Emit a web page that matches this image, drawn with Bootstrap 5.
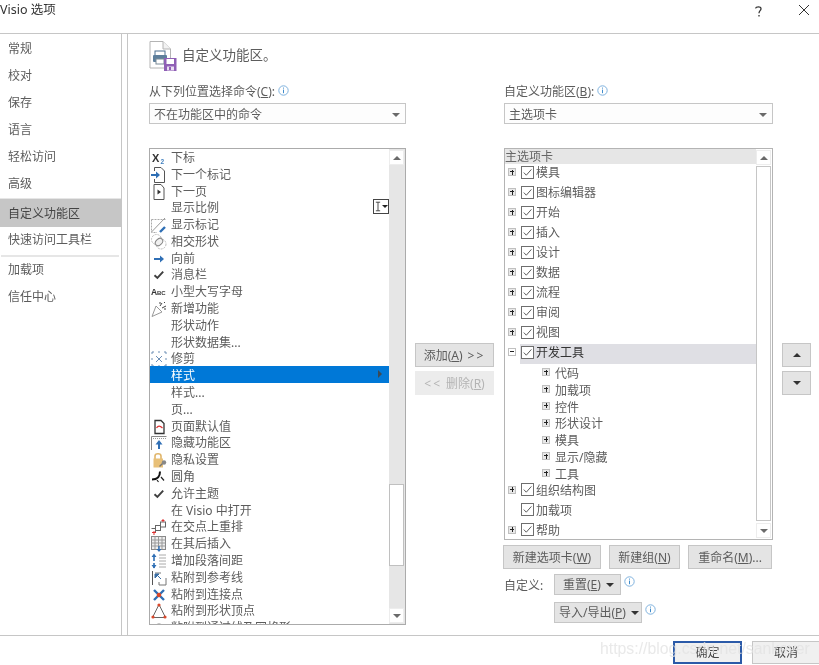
<!DOCTYPE html>
<html lang="zh-CN">
<head>
<meta charset="utf-8">
<title>Visio 选项</title>
<link rel="stylesheet" href="https://cdn.jsdelivr.net/npm/bootstrap@5.3.0/dist/css/bootstrap.min.css">
<style>
html,body{height:665px;overflow:hidden;background:#fff}
body{font-family:"Noto Sans","Noto Sans CJK SC",sans-serif;font-size:12px;line-height:16px;color:#5c5c5c;position:relative;filter:blur(.35px)}
.dlg-title{height:34px;border-bottom:1px solid #c6c6c6;color:#333;padding:1px 0 0 0}
.dlg-title .ttl{line-height:17px;font-size:12.5px}
.dlg-ctrl{color:#333;font-size:14px}
.help-ic{margin:4px 34px 0 0}
.close-ic{margin:3px 9px 0 0}
.dlg-main{height:602px;border-bottom:1px solid #c6c6c6}
.side-nav{width:122px;border-right:1px solid #c6c6c6;flex:none;padding-top:1px}
.side-item{height:27px;padding-left:8px;display:flex;align-items:center}
.side-active{height:28px;background:#c6c6c6;color:#444;margin-top:1.5px;padding-top:2px;box-shadow:0 -1px 0 #e6e6e6}
.side-sep{height:3px;margin:0 2px 0 1px;background:linear-gradient(#fff 1px,#e6e6e6 1px)}
.pane{margin-left:5px;border-left:1px solid #c6c6c6;padding-left:21px;flex:1;min-width:0}
.pane-head{height:49px;padding-top:7px;gap:5px}
.pane-head h1{font-size:13.5px;line-height:28px;margin:0;color:#5c5c5c;font-weight:400}
.pane-grid{display:grid;grid-template-columns:257px 80px 269px 29px;column-gap:9px}
.fld-label{height:20px;display:flex;align-items:flex-start}
.fld-label>span{padding-top:1px}
.fld-label u,.uk{text-underline-offset:1px}
.inf-top{margin-top:1px;margin-left:0}
.drop{height:21px;border:1px solid #c6c6c6;background:#fdfdfd;padding:2px 5px 0 4px;display:flex;align-items:center;justify-content:space-between;margin-bottom:24px}
.caret-d{width:0;height:0;border-left:4px solid transparent;border-right:4px solid transparent;border-top:4px solid #6a6a6a;flex:none}
.box-cmd{height:477px;border:1px solid #ababab;display:flex;overflow:hidden;position:relative}
.cmd-rows{flex:1;min-width:0;overflow:hidden;margin-top:-1px}
.cmd{height:16.8px;display:flex;align-items:center;padding:3px 0 0 1px;white-space:nowrap;position:relative}
.cmd svg{width:16px;height:16px;flex:none;margin-right:4px}
.cmd-on{background:#0078d7;color:#fff}
.cmd-arrow{position:absolute;right:7px;top:4px;border-top:4px solid transparent;border-bottom:4px solid transparent;border-left:4px solid #3c4a56}
.ibeam{position:absolute;left:223px;top:50px;width:16px;height:15px;border:1px solid #444;display:flex;align-items:center;gap:1px;padding-left:1px;background:#fff}
.ibeam i{display:block;width:0;height:0;border-left:3px solid transparent;border-right:3px solid transparent;border-top:3px solid #222}
.sbar{width:16px;flex:none;background:#e6e6e6;display:flex;flex-direction:column;justify-content:space-between;padding:1px 1px 1px 0}
.sbtn{height:15px;background:#fff;display:flex;align-items:center;justify-content:center;border:1px solid #ededed}
.caret-u{width:0;height:0;border-left:4px solid transparent;border-right:4px solid transparent;border-bottom:4px solid #6a6a6a}
.sthumb{background:#fff;border:1px solid #c0c0c0;height:82px;margin-top:319px}
.sbar-w{background:#fff}
.sthumb-w{flex:1;background:#fff;border:1px solid #c6c6c6;margin:1px 0 2px}
.mid-col{padding-top:260px}
.act{height:24px;width:79px;padding:1px 0 0;border-radius:0;border:1px solid #c6c6c6;background:#e4e4e4;color:#5c5c5c;font-size:12px;line-height:1;display:flex;align-items:center;justify-content:center;margin-bottom:4px;box-shadow:none}
.act[disabled]{opacity:1;background:#ececec;color:#b4b4b4;border-color:#ececec}
.act-sq{width:29px;padding:0}
.gt-pair{letter-spacing:2px;margin-left:5px}
.caret-k{width:0;height:0;border-left:4px solid transparent;border-right:4px solid transparent;border-bottom:4px solid #333}
.caret-kd{width:0;height:0;border-left:4px solid transparent;border-right:4px solid transparent;border-top:4px solid #333}
.box-tree{height:392px;border:1px solid #b4b4b4;display:flex;overflow:hidden}
.tree-rows{flex:1;min-width:0;overflow:hidden}
.tree-hd{height:15px;background:#e6e6e6;line-height:16px;color:#666}
.tn{height:20px;display:flex;align-items:flex-start;white-space:nowrap;padding-left:3px}
.tn-body{display:flex;align-items:flex-start;flex:1;height:20px;margin-left:5px;gap:2px}
.tn-body>span{padding-top:1px}
.tn-on .tn-body{background:#dfdfe4;color:#333;margin-left:4px;padding-left:1px}
.tn-blank{width:8px;flex:none}
.exp{width:8px;height:8px;flex:none;background:#e8e8e8;border:1px solid #c0c0c0;position:relative;margin-top:4px}
.exp::before{content:"";position:absolute;left:1px;right:1px;top:2px;height:1px;background:#222}
.exp-plus::after{content:"";position:absolute;top:0.5px;bottom:0.5px;left:2.5px;width:1px;background:#222}
.exp-minus{background:#fff}
.chk{width:13px;height:13px;flex:none;margin-top:1.5px}
.ts{height:16.8px;display:flex;align-items:center;white-space:nowrap;padding:3px 0 0 37px;gap:5px}
.ts .exp{margin-top:-3px}
.row-btns{margin-top:5px;height:24px;gap:8px}
.row-btns .act{margin:0;flex:none}
.row-btns .wb-a{width:98px;margin-left:-1px}
.row-btns .wb-b{width:71px}
.row-btns .wb-c{width:84px}
.row-cust{margin-top:5px;height:21px}
.row-imp{margin-top:7px;height:21px;padding-left:50px}
.act-m{height:21px;gap:5px;margin:0;justify-content:flex-start;padding-left:8px}
.wm-a{width:67px}
.wm-b{width:88px;padding-left:4px}
.cust-l{width:50px;flex:none;padding-top:4px}
.inf{width:11px;height:11px;flex:none;margin-left:3px;margin-top:2px}
.dlg-foot{height:29px;gap:10px;padding-top:5px}
.ok-b,.no-b{height:23px;border-radius:0;padding:0;background:#f0f0f0;color:#444;font-size:12px;line-height:1;box-shadow:none}
.ok-b{width:69px;border:2px solid #2b5aa8}
.no-b{width:67px;border:1px solid #c6c6c6;border-right:0}
.wmark{position:absolute;left:600px;top:639px;font-family:"Liberation Sans",sans-serif;font-size:15.8px;line-height:20px;color:rgba(225,225,225,.75);pointer-events:none;white-space:nowrap}
</style>
</head>
<body>
<svg width="0" height="0" class="position-absolute">
<defs>
<symbol id="ic-chk" viewBox="0 0 13 13"><rect x=".5" y=".5" width="12" height="12" fill="#fff" stroke="#6e6e6e"/><path d="M2.8 6.6 5.3 9.2 10.4 3.4" fill="none" stroke="#5c5c5c" stroke-width="1"/></symbol>
<symbol id="ic-inf" viewBox="0 0 11 11"><circle cx="5.5" cy="5.5" r="4.7" fill="#fff" stroke="#7fb2de"/><path d="M5.5 4.6v3.6M5.5 2.6v1" stroke="#3f8ccb" stroke-width="1"/></symbol>
<symbol id="ic-tick" viewBox="0 0 16 16"><path d="M3.5 8.2 6.4 11 12.2 4.6" fill="none" stroke="#404040" stroke-width="1.9"/></symbol>
</defs>
</svg>

<div class="dlg-title d-flex justify-content-between">
  <span class="ttl">Visio 选项</span>
  <div class="dlg-ctrl d-flex">
    <svg class="help-ic" width="10" height="14" viewBox="0 0 10 14"><path d="M1.5 3.4C2 1.5 7 1 7 3.8 7 5.8 5 5.6 5 8.2M5 10v1.6" fill="none" stroke="#333" stroke-width="1.3"/></svg>
    <svg class="close-ic" width="12" height="12" viewBox="0 0 12 12"><path d="M1 1 11 11M11 1 1 11" stroke="#333"/></svg>
  </div>
</div>

<div class="dlg-main d-flex">
  <nav class="side-nav">
    <div class="side-item">常规</div>
    <div class="side-item">校对</div>
    <div class="side-item">保存</div>
    <div class="side-item">语言</div>
    <div class="side-item">轻松访问</div>
    <div class="side-item">高级</div>
    <div class="side-item side-active">自定义功能区</div>
    <div class="side-item">快速访问工具栏</div>
    <div class="side-sep"></div>
    <div class="side-item">加载项</div>
    <div class="side-item">信任中心</div>
  </nav>

  <section class="pane">
    <div class="pane-head d-flex align-items-start">
      <svg width="28" height="30" viewBox="0 0 28 30">
        <path d="M1 .5H14L21.5 8V23H20V27H1Z" fill="#fff" stroke="#b4b4b4"/><path d="M14 .5V8H21.5" fill="#f2f2f2" stroke="#b4b4b4"/>
        <rect x="6" y="10" width="10" height="5" fill="#fff" stroke="#4b6f8f"/><rect x="4" y="14" width="14" height="7" rx="1" fill="#5d7f9c"/><rect x="7" y="18" width="8" height="5" fill="#fff" stroke="#7b8b98"/>
        <rect x="15" y="17" width="12.5" height="13" fill="#8f5fb5"/><rect x="17.5" y="18" width="7.5" height="5" fill="#fff"/><rect x="18" y="25.5" width="7" height="4" fill="#e9def2"/><rect x="20" y="26" width="2" height="3" fill="#8f5fb5"/>
      </svg>
      <h1>自定义功能区。</h1>
    </div>

    <div class="pane-grid">
      <div>
        <div class="fld-label"><span>从下列位置选择命令(<u>C</u>):</span><svg class="inf inf-top"><use href="#ic-inf"/></svg></div>
        <div class="drop"><span>不在功能区中的命令</span><span class="caret-d"></span></div>
        <div class="box-cmd">
          <div class="cmd-rows">
            <div class="cmd"><svg viewBox="0 0 16 16"><text x="1" y="12" font-family="Liberation Sans" font-weight="700" font-size="11" fill="#333">X</text><text x="9.5" y="14" font-family="Liberation Sans" font-weight="700" font-size="6.5" fill="#3f7fbf">2</text></svg>下标</div>
            <div class="cmd"><svg viewBox="0 0 16 16"><path d="M3.5 4V.5H10L13.5 4V15.5H3.5V12" fill="#fff" stroke="#555"/><path d="M0 8H7" stroke="#2f6fb5" stroke-width="2"/><path d="M5 4.5 9 8 5 11.5Z" fill="#2f6fb5"/></svg>下一个标记</div>
            <div class="cmd"><svg viewBox="0 0 16 16"><path d="M3 .5H10L13 4V15.5H3Z" fill="#fff" stroke="#555"/><path d="M6.5 5.5 10 8 6.5 10.5Z" fill="#333"/></svg>下一页</div>
            <div class="cmd"><svg viewBox="0 0 16 16"></svg>显示比例</div>
            <div class="cmd"><svg viewBox="0 0 16 16"><path d="M.5 2.5H15M.5 2.5V15.5H6" fill="none" stroke="#aaa" stroke-dasharray="2 1"/><path d="M.5 15 14 1" stroke="#999"/><path d="M9 15 14 10" stroke="#2f6fb5" stroke-width="2.4"/></svg>显示标记</div>
            <div class="cmd"><svg viewBox="0 0 16 16"><circle cx="5.5" cy="5.5" r="5" fill="none" stroke="#bbb" stroke-dasharray="2 1"/><circle cx="10" cy="10" r="5" fill="none" stroke="#bbb" stroke-dasharray="2 1"/><ellipse cx="8" cy="8" rx="4.2" ry="3" transform="rotate(-45 8 8)" fill="#f0f0f0" stroke="#888"/></svg>相交形状</div>
            <div class="cmd"><svg viewBox="0 0 16 16"><path d="M3 8H10" stroke="#2f6fb5" stroke-width="2"/><path d="M9 4.5 13 8 9 11.5Z" fill="#2f6fb5"/></svg>向前</div>
            <div class="cmd"><svg viewBox="0 0 16 16"><use href="#ic-tick"/></svg>消息栏</div>
            <div class="cmd"><svg viewBox="0 0 16 16"><text x="0" y="11" font-family="Liberation Sans" font-weight="700" font-size="8.5" fill="#333">A</text><text x="6" y="11" font-family="Liberation Sans" font-weight="700" font-size="6" fill="#333">BC</text></svg>小型大写字母</div>
            <div class="cmd"><svg viewBox="0 0 16 16"><path d="M1 15.5 5 5 11 11Z" fill="#fff" stroke="#999"/><path d="M9 5 11 2M11 7 15 5M9 3V1M13 8h2M13 2l1-1" stroke="#444"/></svg>新增功能</div>
            <div class="cmd"><svg viewBox="0 0 16 16"></svg>形状动作</div>
            <div class="cmd"><svg viewBox="0 0 16 16"></svg>形状数据集...</div>
            <div class="cmd"><svg viewBox="0 0 16 16"><path d="M5 5 11 11M11 5 5 11" stroke="#6d8fb5"/><path d="M1 3V1H3M7 1H9M13 1H15V3M1 7V9M15 7V9M1 13V15H3M7 15H9M13 15H15V13" fill="none" stroke="#6d8fb5"/></svg>修剪</div>
            <div class="cmd cmd-on"><svg viewBox="0 0 16 16"></svg>样式<span class="cmd-arrow"></span></div>
            <div class="cmd"><svg viewBox="0 0 16 16"></svg>样式...</div>
            <div class="cmd"><svg viewBox="0 0 16 16"></svg>页...</div>
            <div class="cmd"><svg viewBox="0 0 16 16"><path d="M4 1.5H10L13 4.5V14.5H4Z" fill="#fff" stroke="#333" stroke-width="1.3"/><path d="M5.5 9C7 6.5 9 6.5 11.5 9" fill="none" stroke="#d33" stroke-width="1.2"/></svg>页面默认值</div>
            <div class="cmd"><svg viewBox="0 0 16 16"><path d="M.5 15V1.5H15.5" fill="none" stroke="#888"/><path d="M2 3.5H15" stroke="#999" stroke-dasharray="1 1"/><path d="M8 14V8" stroke="#2f6fb5" stroke-width="2"/><path d="M4.5 9.5 8 5 11.5 9.5Z" fill="#2f6fb5"/></svg>隐藏功能区</div>
            <div class="cmd"><svg viewBox="0 0 16 16"><path d="M4 7V4C4 1 10 1 10 4V7" fill="none" stroke="#e0b56a" stroke-width="1.6"/><rect x="2.5" y="6.5" width="9.5" height="9" fill="#e8c078"/><path d="M8.5 14.5 12 11" stroke="#777" stroke-width="1.4"/><circle cx="13" cy="10.5" r="2.2" fill="#888"/></svg>隐私设置</div>
            <div class="cmd"><svg viewBox="0 0 16 16"><path d="M1 10.5C6 10.5 9 8 9 2.5" fill="none" stroke="#111" stroke-width="2"/><path d="M10 8 13 11.5M6 11l1.5 2" stroke="#222" stroke-width="1.2"/></svg>圆角</div>
            <div class="cmd"><svg viewBox="0 0 16 16"><use href="#ic-tick"/></svg>允许主题</div>
            <div class="cmd"><svg viewBox="0 0 16 16"></svg>在 Visio 中打开</div>
            <div class="cmd"><svg viewBox="0 0 16 16"><rect x="9.5" y="3" width="5" height="5" fill="#fff" stroke="#666"/><rect x="4.5" y="6.5" width="5" height="5" fill="#fff" stroke="#666"/><path d="M.5 9.5H4.5V14" fill="none" stroke="#666"/><path d="M12 0v3M10.5 1.5h3M3 12v4M1 13.5h4" stroke="#d33"/></svg>在交点上重排</div>
            <div class="cmd"><svg viewBox="0 0 16 16"><rect x=".5" y=".5" width="14" height="13" fill="#eee" stroke="#888"/><path d="M.5 4H14.5M.5 7H14.5M.5 10H14.5M4 .5V13.5M7.5 .5V13.5M11 .5V13.5" stroke="#999"/><path d="M8 10V14" stroke="#2f6fb5" stroke-width="1.4"/><path d="M5.5 13 8 16 10.5 13Z" fill="#2f6fb5"/></svg>在其后插入</div>
            <div class="cmd"><svg viewBox="0 0 16 16"><path d="M3 8V3M3 10V15" stroke="#2f6fb5" stroke-width="1.6"/><path d="M.5 4 3 .5 5.5 4ZM.5 12 3 15.5 5.5 12Z" fill="#2f6fb5"/><path d="M8 2H15M8 5H15M8 8H15M8 11H15M8 14H15" stroke="#aaa"/></svg>增加段落间距</div>
            <div class="cmd"><svg viewBox="0 0 16 16"><path d="M1.5 1V15" stroke="#555"/><path d="M4 3H10M15 8V15H8V12" fill="none" stroke="#777"/><path d="M5 4 10 9M4 4H8L4 8Z" fill="#3a6ea5" stroke="#3a6ea5"/></svg>粘附到参考线</div>
            <div class="cmd"><svg viewBox="0 0 16 16"><path d="M3 3 13 13M13 3 3 13" stroke="#2f6fb5" stroke-width="2.4"/><circle cx="8" cy="8" r="2.3" fill="#d9482b"/></svg>粘附到连接点</div>
            <div class="cmd"><svg viewBox="0 0 16 16"><path d="M8 1.5 1.5 14.5H14.5Z" fill="#fff" stroke="#666"/><circle cx="8" cy="2" r="1.6" fill="#d9482b"/><circle cx="2" cy="14" r="1.6" fill="#d9482b"/><circle cx="14" cy="14" r="1.6" fill="#d9482b"/></svg>粘附到形状顶点</div>
            <div class="cmd"><svg viewBox="0 0 16 16"><circle cx="8" cy="10" r="6" fill="#fff" stroke="#777"/></svg>粘附到通过线及网格形</div>
          </div>
          <div class="ibeam"><svg width="7" height="11" viewBox="0 0 7 11"><path d="M1 .5H6M3.5 .5V10.5M1 10.5H6" stroke="#333" fill="none"/></svg><i></i></div>
          <div class="sbar">
            <div class="sbtn"><span class="caret-u"></span></div>
            <div class="sthumb"></div>
            <div class="flex-grow-1"></div>
            <div class="sbtn"><span class="caret-d"></span></div>
          </div>
        </div>
      </div>

      <div class="mid-col">
        <button class="btn act" type="button">添加(<span class="uk text-decoration-underline">A</span>)<span class="gt-pair">&gt;&gt;</span></button>
        <button class="btn act" type="button" disabled><span class="gt-pair ms-0 me-1">&lt;&lt;</span>删除(<span class="uk text-decoration-underline">R</span>)</button>
      </div>

      <div>
        <div class="fld-label"><span>自定义功能区(<u>B</u>):</span><svg class="inf inf-top"><use href="#ic-inf"/></svg></div>
        <div class="drop"><span>主选项卡</span><span class="caret-d"></span></div>
        <div class="box-tree">
          <div class="tree-rows">
            <div class="tree-hd">主选项卡</div>
            <div class="tn"><span class="exp exp-plus"></span><div class="tn-body"><svg class="chk"><use href="#ic-chk"/></svg><span>模具</span></div></div>
            <div class="tn"><span class="exp exp-plus"></span><div class="tn-body"><svg class="chk"><use href="#ic-chk"/></svg><span>图标编辑器</span></div></div>
            <div class="tn"><span class="exp exp-plus"></span><div class="tn-body"><svg class="chk"><use href="#ic-chk"/></svg><span>开始</span></div></div>
            <div class="tn"><span class="exp exp-plus"></span><div class="tn-body"><svg class="chk"><use href="#ic-chk"/></svg><span>插入</span></div></div>
            <div class="tn"><span class="exp exp-plus"></span><div class="tn-body"><svg class="chk"><use href="#ic-chk"/></svg><span>设计</span></div></div>
            <div class="tn"><span class="exp exp-plus"></span><div class="tn-body"><svg class="chk"><use href="#ic-chk"/></svg><span>数据</span></div></div>
            <div class="tn"><span class="exp exp-plus"></span><div class="tn-body"><svg class="chk"><use href="#ic-chk"/></svg><span>流程</span></div></div>
            <div class="tn"><span class="exp exp-plus"></span><div class="tn-body"><svg class="chk"><use href="#ic-chk"/></svg><span>审阅</span></div></div>
            <div class="tn"><span class="exp exp-plus"></span><div class="tn-body"><svg class="chk"><use href="#ic-chk"/></svg><span>视图</span></div></div>
            <div class="tn tn-on"><span class="exp exp-minus"></span><div class="tn-body"><svg class="chk"><use href="#ic-chk"/></svg><span>开发工具</span></div></div>
            <div class="ts"><span class="exp exp-plus"></span><span>代码</span></div>
            <div class="ts"><span class="exp exp-plus"></span><span>加载项</span></div>
            <div class="ts"><span class="exp exp-plus"></span><span>控件</span></div>
            <div class="ts"><span class="exp exp-plus"></span><span>形状设计</span></div>
            <div class="ts"><span class="exp exp-plus"></span><span>模具</span></div>
            <div class="ts"><span class="exp exp-plus"></span><span>显示/隐藏</span></div>
            <div class="ts"><span class="exp exp-plus"></span><span>工具</span></div>
            <div class="tn"><span class="exp exp-plus"></span><div class="tn-body"><svg class="chk"><use href="#ic-chk"/></svg><span>组织结构图</span></div></div>
            <div class="tn"><span class="tn-blank"></span><div class="tn-body"><svg class="chk"><use href="#ic-chk"/></svg><span>加载项</span></div></div>
            <div class="tn"><span class="exp exp-plus"></span><div class="tn-body"><svg class="chk"><use href="#ic-chk"/></svg><span>帮助</span></div></div>
          </div>
          <div class="sbar sbar-w">
            <div class="sbtn"><span class="caret-u"></span></div>
            <div class="sthumb-w"></div>
            <div class="sbtn"><span class="caret-d"></span></div>
          </div>
        </div>
        <div class="row-btns d-flex">
          <button class="btn act wb-a" type="button">新建选项卡(<span class="uk text-decoration-underline">W</span>)</button>
          <button class="btn act wb-b" type="button">新建组(<span class="uk text-decoration-underline">N</span>)</button>
          <button class="btn act wb-c" type="button">重命名(<span class="uk text-decoration-underline">M</span>)...</button>
        </div>
        <div class="row-cust d-flex">
          <span class="cust-l">自定义:</span>
          <button class="btn act act-m wm-a" type="button"><span>重置(<span class="uk text-decoration-underline">E</span>)</span><span class="caret-kd"></span></button>
          <svg class="inf"><use href="#ic-inf"/></svg>
        </div>
        <div class="row-imp d-flex">
          <button class="btn act act-m wm-b" type="button"><span>导入/导出(<span class="uk text-decoration-underline">P</span>)</span><span class="caret-kd"></span></button>
          <svg class="inf"><use href="#ic-inf"/></svg>
        </div>
      </div>

      <div class="mid-col">
        <button class="btn act act-sq" type="button" aria-label="上移"><span class="caret-k"></span></button>
        <button class="btn act act-sq" type="button" aria-label="下移"><span class="caret-kd"></span></button>
      </div>
    </div>
  </section>
</div>

<footer class="dlg-foot d-flex justify-content-end">
  <button class="btn ok-b" type="button">确定</button>
  <button class="btn no-b" type="button">取消</button>
</footer>
<div class="wmark">https://blog.csdn.net/sankever</div>
</body>
</html>
